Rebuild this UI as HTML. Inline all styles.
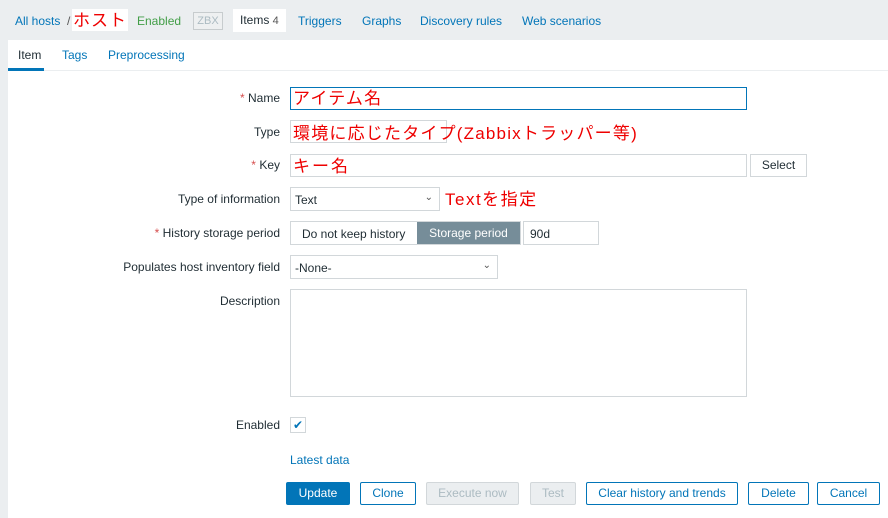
<!DOCTYPE html>
<html><head><meta charset="utf-8"><style>
*{box-sizing:border-box;margin:0;padding:0}
body{width:888px;height:518px;background:#ebeef0;font-family:"Liberation Sans",Arial,sans-serif;font-size:12px;color:#1f2c33;position:relative;overflow:hidden}
.a{position:absolute;white-space:nowrap}
.l{color:#0275b8}
.panel{position:absolute;left:8px;top:40px;width:880px;height:478px;background:#fff}
.lbl{position:absolute;right:608px;text-align:right;white-space:nowrap}
.req{color:#d64e4e}
.box{position:absolute;border:1px solid #d2d7da;background:#fff}
.red{color:#e00;font-family:"Liberation Sans","Noto Sans CJK JP",sans-serif;font-size:17px;position:absolute;white-space:nowrap;line-height:20px}
.btn{position:absolute;top:482px;height:23px;border:1px solid #0275b8;color:#0275b8;background:#fff;border-radius:2px;text-align:center;line-height:21px}
.dis{border-color:#d2d7da;color:#acbbc2;background:#ebeef0}
.car{position:absolute;right:6px;top:4px;font-size:10px;color:#555}
</style></head><body>
<div class="a l" style="left:15px;top:14px">All hosts</div>
<div class="a" style="left:67px;top:14px;color:#555">/</div>
<div class="a" style="left:72px;top:9px;width:56px;height:22px;background:#fff"></div>
<div class="red" style="left:73px;top:11px;letter-spacing:1px">ホスト</div>
<div class="a" style="left:137px;top:14px;color:#429e47">Enabled</div>
<div class="a" style="left:193px;top:12px;width:30px;height:18px;border:1px solid #c7ccce;color:#acbbc2;font-size:11px;text-align:center;line-height:16px;background:#eef0f1">ZBX</div>
<div class="a" style="left:233px;top:9px;width:53px;height:23px;background:#fff;line-height:23px;padding-left:7px">Items <span style="color:#555;font-size:11px">4</span></div>
<div class="a l" style="left:298px;top:14px">Triggers</div>
<div class="a l" style="left:362px;top:14px">Graphs</div>
<div class="a l" style="left:420px;top:14px">Discovery rules</div>
<div class="a l" style="left:522px;top:14px">Web scenarios</div>
<div class="panel"></div>
<div class="a" style="left:8px;top:70px;width:880px;height:1px;background:#ebeef0"></div>
<div class="a" style="left:18px;top:48px">Item</div>
<div class="a" style="left:8px;top:68px;width:36px;height:3px;background:#0275b8"></div>
<div class="a l" style="left:62px;top:48px">Tags</div>
<div class="a l" style="left:108px;top:48px">Preprocessing</div>

<div class="lbl" style="top:91px"><span class="req">* </span>Name</div>
<div class="lbl" style="top:125px">Type</div>
<div class="lbl" style="top:158px"><span class="req">* </span>Key</div>
<div class="lbl" style="top:192px">Type of information</div>
<div class="lbl" style="top:226px"><span class="req">* </span>History storage period</div>
<div class="lbl" style="top:260px">Populates host inventory field</div>
<div class="lbl" style="top:294px">Description</div>
<div class="lbl" style="top:418px">Enabled</div>

<div class="box" style="left:290px;top:87px;width:457px;height:23px;border-color:#0275b8"></div>
<div class="red" style="left:293px;top:89px;letter-spacing:1.2px">アイテム名</div>
<div class="box" style="left:290px;top:120px;width:157px;height:23px"></div>
<div class="red" style="left:293px;top:124px;letter-spacing:1.2px">環境に応じたタイプ(Zabbixトラッパー等)</div>
<div class="box" style="left:290px;top:154px;width:457px;height:23px"></div>
<div class="red" style="left:293px;top:157px;letter-spacing:2px">キー名</div>
<div class="box" style="left:750px;top:154px;width:57px;height:23px;text-align:center;line-height:21px">Select</div>
<div class="box" style="left:290px;top:187px;width:150px;height:24px;padding:5px 4px">Text<span class="car">&#8964;</span></div>
<div class="red" style="left:445px;top:190px;letter-spacing:1.5px">Textを指定</div>
<div class="box" style="left:290px;top:221px;width:231px;height:24px"></div>
<div class="a" style="left:302px;top:227px">Do not keep history</div>
<div class="a" style="left:417px;top:222px;width:103px;height:22px;background:#768d99;color:#fff;text-align:center;line-height:22px">Storage period</div>
<div class="box" style="left:523px;top:221px;width:76px;height:24px;padding:5px 6px">90d</div>
<div class="box" style="left:290px;top:255px;width:208px;height:24px;padding:5px 4px">-None-<span class="car">&#8964;</span></div>
<div class="box" style="left:290px;top:289px;width:457px;height:108px"></div>
<div class="box" style="left:290px;top:417px;width:16px;height:16px;color:#0275b8;font-size:12px;line-height:14px;text-align:center">✔</div>
<div class="a l" style="left:290px;top:453px">Latest data</div>

<div class="btn" style="left:286px;width:64px;background:#0275b8;color:#fff">Update</div>
<div class="btn" style="left:360px;width:56px">Clone</div>
<div class="btn dis" style="left:426px;width:93px">Execute now</div>
<div class="btn dis" style="left:530px;width:46px">Test</div>
<div class="btn" style="left:586px;width:152px">Clear history and trends</div>
<div class="btn" style="left:748px;width:61px">Delete</div>
<div class="btn" style="left:817px;width:63px">Cancel</div>
</body></html>
